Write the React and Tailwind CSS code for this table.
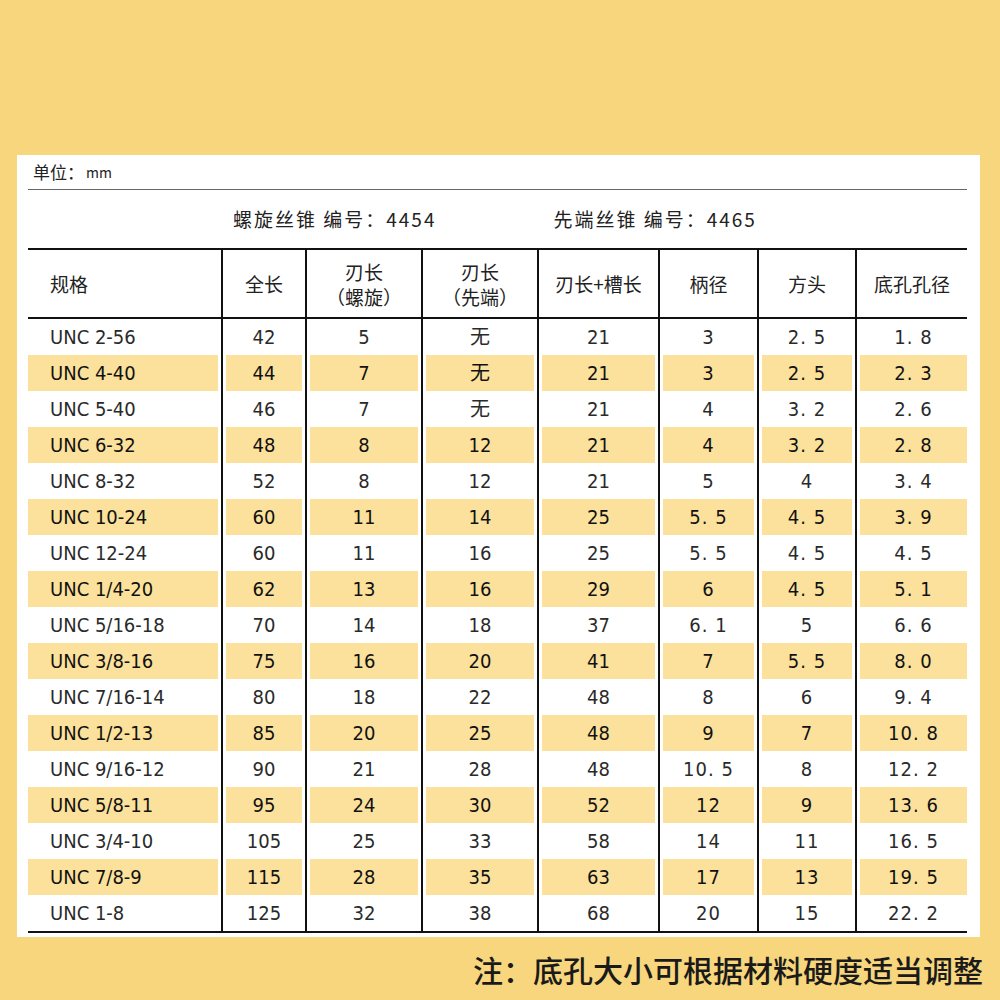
import React from 'react';

const rows = [
  ['UNC 2-56', '42', '5', '无', '21', '3', '2.5', '1.8'],
  ['UNC 4-40', '44', '7', '无', '21', '3', '2.5', '2.3'],
  ['UNC 5-40', '46', '7', '无', '21', '4', '3.2', '2.6'],
  ['UNC 6-32', '48', '8', '12', '21', '4', '3.2', '2.8'],
  ['UNC 8-32', '52', '8', '12', '21', '5', '4', '3.4'],
  ['UNC 10-24', '60', '11', '14', '25', '5.5', '4.5', '3.9'],
  ['UNC 12-24', '60', '11', '16', '25', '5.5', '4.5', '4.5'],
  ['UNC 1/4-20', '62', '13', '16', '29', '6', '4.5', '5.1'],
  ['UNC 5/16-18', '70', '14', '18', '37', '6.1', '5', '6.6'],
  ['UNC 3/8-16', '75', '16', '20', '41', '7', '5.5', '8.0'],
  ['UNC 7/16-14', '80', '18', '22', '48', '8', '6', '9.4'],
  ['UNC 1/2-13', '85', '20', '25', '48', '9', '7', '10.8'],
  ['UNC 9/16-12', '90', '21', '28', '48', '10.5', '8', '12.2'],
  ['UNC 5/8-11', '95', '24', '30', '52', '12', '9', '13.6'],
  ['UNC 3/4-10', '105', '25', '33', '58', '14', '11', '16.5'],
  ['UNC 7/8-9', '115', '28', '35', '63', '17', '13', '19.5'],
  ['UNC 1-8', '125', '32', '38', '68', '20', '15', '22.2'],
];

const cols = 'grid grid-cols-[193px_84px_116px_116px_121px_99px_98px_112px]';
const font = { fontFamily: '"Noto Sans CJK SC", "Noto Sans", sans-serif' };
const narrow = { fontFamily: '"Liberation Sans Narrow", "DejaVu Sans Condensed", "Noto Sans CJK SC", sans-serif' };

// spaced-out decimals like "2. 5" in the last columns
const fmt = (v) => v.replace('.', '. ');

function Cell({ i, striped, children }) {
  const first = i === 0;
  const last = i === 7;
  return (
    <div
      className={`h-[36px] ${first ? 'pr-[3px]' : 'border-l-2 border-[#111]'} ${!first && !last ? 'px-[3px]' : ''} ${last ? 'pl-[3px]' : ''}`}
    >
      <div
        className={`h-full flex items-center ${first ? 'pl-[22px] justify-start' : 'justify-center'} ${striped ? 'bg-[#fbe19b] text-[#111]' : 'text-[#2a2a2a]'}`}
      >
        {children}
      </div>
    </div>
  );
}

function HeadCell({ i, children }) {
  return (
    <div
      className={`h-[67px] flex flex-col justify-center leading-[25px] ${i === 0 ? 'pl-[22px] items-start' : 'items-center border-l-2 border-[#111]'}`}
    >
      {children}
    </div>
  );
}

export default function App() {
  return (
    <div className="w-[1000px] h-[1000px] bg-[#f7d67d] pt-[155px] pl-[17px]" style={font}>
      <div className="w-[963px] h-[782px] bg-white pl-[11px] pr-[13px]">
        {/* unit */}
        <div className="h-[35px] flex items-center pl-[5px] text-[17px] text-[#222] border-b-[1.5px] border-[#666]">
          单位：<span className="text-[14px] ml-[2px]">mm</span>
        </div>

        {/* tap types */}
        <div className="h-[58px] flex items-center text-[19px] text-[#222] tracking-[2px]">
          <span className="ml-[205px]">螺旋丝锥 编号：4454</span>
          <span className="ml-[117px]">先端丝锥 编号：4465</span>
        </div>

        {/* header */}
        <div className={`${cols} border-t-2 border-b-2 border-[#111] text-[19px] text-[#222]`}>
          <HeadCell i={0}>规格</HeadCell>
          <HeadCell i={1}>全长</HeadCell>
          <HeadCell i={2}>
            <span>刃长</span>
            <span>（螺旋）</span>
          </HeadCell>
          <HeadCell i={3}>
            <span>刃长</span>
            <span>（先端）</span>
          </HeadCell>
          <HeadCell i={4}>刃长+槽长</HeadCell>
          <HeadCell i={5}>柄径</HeadCell>
          <HeadCell i={6}>方头</HeadCell>
          <HeadCell i={7}>底孔孔径</HeadCell>
        </div>

        {/* body */}
        <div className="border-b-2 border-[#111] text-[20px]" style={narrow}>
          {rows.map((r, ri) => {
            const striped = ri % 2 === 1;
            return (
              <div key={ri} className={cols}>
                {r.map((v, i) => (
                  <Cell key={i} i={i} striped={striped}>
                    <span className={i >= 5 ? 'tracking-[1px] whitespace-pre' : 'whitespace-pre'}>
                      {i >= 5 ? fmt(v) : v}
                    </span>
                  </Cell>
                ))}
              </div>
            );
          })}
        </div>
      </div>

      {/* note */}
      <div className="w-[966px] flex justify-end pt-[17px] text-[30px] font-medium text-[#1a1a1a] leading-none">
        注：底孔大小可根据材料硬度适当调整
      </div>
    </div>
  );
}
